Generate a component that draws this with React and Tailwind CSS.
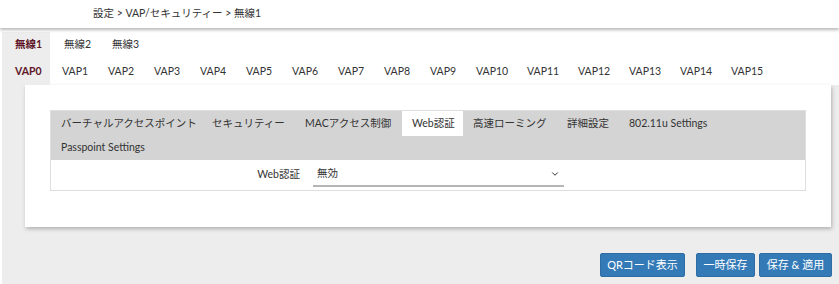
import React from "react";
import { ChevronDown } from "lucide-react";

const radios = [
  { label: "無線1", w: "w-[48px] pl-[13px]" },
  { label: "無線2", w: "w-[48px] pl-[14px]" },
  { label: "無線3", w: "w-[48px] pl-[14px]" },
];
const vaps = Array.from({ length: 16 }, (_, i) => ({
  label: `VAP${i}`,
  w: i === 0 ? "w-[48px] pl-[13px]" : i < 10 ? "w-[46px] pl-[12px]" : "w-[51px] pl-[12px]",
}));
const subTabs = [
  { label: "バーチャルアクセスポイント", w: "w-[151px]" },
  { label: "セキュリティー", w: "w-[93px]" },
  { label: "MACアクセス制御", w: "w-[107px]" },
  { label: "Web認証", w: "w-[61px]", active: true },
  { label: "高速ローミング", w: "w-[94px]" },
  { label: "詳細設定", w: "w-[62px]" },
  { label: "802.11u Settings", w: "w-[96px]" },
];

const TopTab = ({ label, w, active }) => (
  <div
    className={`${w} shrink-0 flex items-center whitespace-nowrap ${
      active ? "bg-[#ededed] text-[#5e1628] font-bold" : "text-[#333]"
    }`}
  >
    {label}
  </div>
);

export default function App() {
  return (
    <div
      className="w-[839px] h-[284px] overflow-hidden bg-white text-[10.5px] text-[#333]"
      style={{ fontFamily: 'Lato, "Noto Sans CJK JP", sans-serif' }}
    >
      <header className="relative z-10 h-[28px] bg-white pl-[93px] flex items-center shadow-[0_2px_3px_rgba(0,0,0,0.28)]">
        設定 &gt; VAP/セキュリティー &gt; 無線1
      </header>

      <div className="ml-[2px] mt-[4px] h-[252px] bg-[#ededed]">
        <div className="bg-white">
          <div className="flex h-[26px]">
            {radios.map((r, i) => (
              <TopTab key={r.label} {...r} active={i === 0} />
            ))}
          </div>
          <div className="flex h-[27px]">
            {vaps.map((v, i) => (
              <TopTab key={v.label} {...v} active={i === 0} />
            ))}
          </div>
        </div>

        <div className="ml-[23px] w-[806px] bg-white pt-[25px] px-[25px] pb-[36px] shadow-[1px_2px_4px_rgba(0,0,0,0.25)]">
          <div className="border border-[#dedede]">
            <div className="bg-[#d4d4d4] flex flex-wrap">
              {subTabs.map((t) => (
                <div
                  key={t.label}
                  className={`${t.w} h-[25px] pl-[10px] flex items-center whitespace-nowrap ${
                    t.active ? "bg-white" : ""
                  }`}
                >
                  {t.label}
                </div>
              ))}
              <div className="w-full h-[24px] pl-[10px] flex items-center">
                Passpoint Settings
              </div>
            </div>
            <div className="h-[30px] flex items-center">
              <div className="w-[262px] text-right pr-[13px]">Web認証</div>
              <div className="w-[251px] h-[24px] flex items-center justify-between pl-[4px] pr-[4px] border-b-2 border-[#b5b5b5]">
                <span>無効</span>
                <ChevronDown size={10} strokeWidth={2.4} />
              </div>
            </div>
          </div>
        </div>

        <div className="flex justify-end mt-[26px] mr-[7px] gap-[4px] text-white text-[11px]">
          <button className="w-[85px] h-[24px] mr-[7px] rounded-[2px] bg-[#337ab7] border border-[#2e6da4]">
            QRコード表示
          </button>
          <button className="w-[59px] h-[24px] rounded-[2px] bg-[#337ab7] border border-[#2e6da4]">
            一時保存
          </button>
          <button className="w-[73px] h-[24px] rounded-[2px] bg-[#337ab7] border border-[#2e6da4]">
            保存 &amp; 適用
          </button>
        </div>
      </div>
    </div>
  );
}
